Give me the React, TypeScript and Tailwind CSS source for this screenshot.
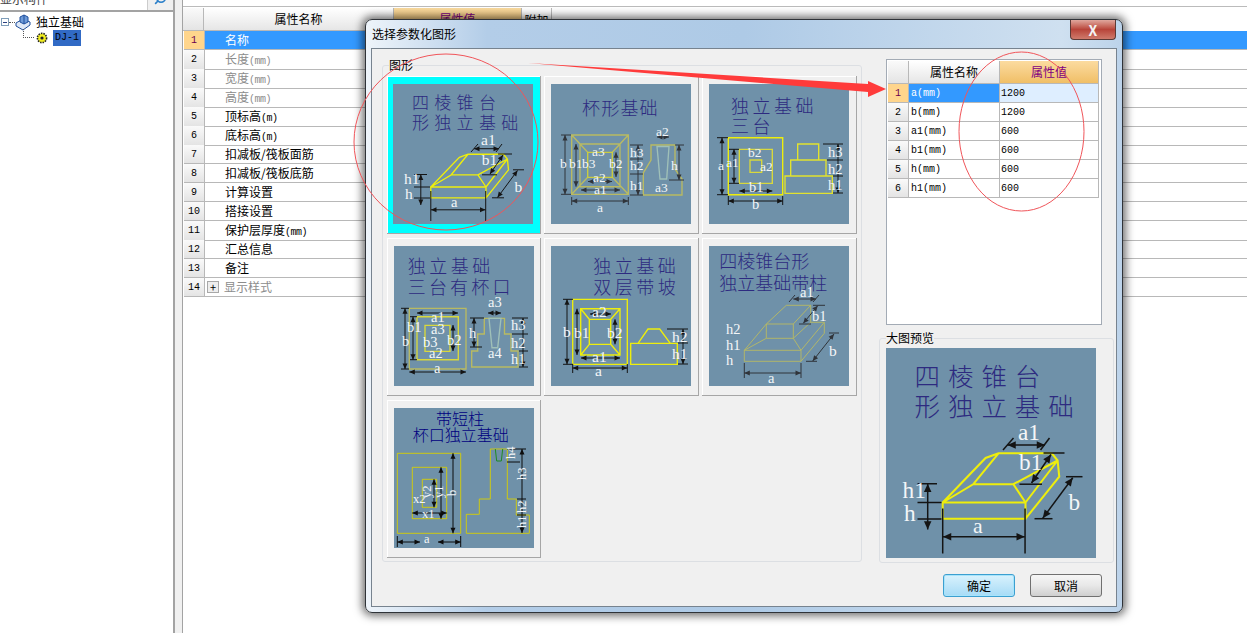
import type { ReactNode } from "react";
import { Search } from "lucide-react";

const cjk = "font-['Noto_Sans_CJK_SC','Liberation_Sans',sans-serif]";
const mono = "font-['Liberation_Mono','Noto_Sans_CJK_SC',monospace]";

const INK = "#141414";
const BRIGHT = "#eeee0c";
const DULL = "#b9ba62";

/* small svg helpers, all coordinates in the 140x140 picture */
function Dim({ x1, y1, x2, y2, c = INK }: { x1: number; y1: number; x2: number; y2: number; c?: string }) {
	const len = Math.hypot(x2 - x1, y2 - y1) || 1;
	const ux = (x2 - x1) / len;
	const uy = (y2 - y1) / len;
	const head = (x: number, y: number, d: number) =>
		`${x},${y} ${x + d * ux * 5.5 - uy * 2.5},${y + d * uy * 5.5 + ux * 2.5} ${x + d * ux * 5.5 + uy * 2.5},${y + d * uy * 5.5 - ux * 2.5}`;
	return (
		<g>
			<line x1={x1} y1={y1} x2={x2} y2={y2} stroke={c} strokeWidth="1" />
			<polygon points={head(x1, y1, 1)} fill={c} />
			<polygon points={head(x2, y2, -1)} fill={c} />
		</g>
	);
}

function Ticks({ lines, c = INK, w = 1 }: { lines: number[][]; c?: string; w?: number }) {
	return (
		<g stroke={c} strokeWidth={w}>
			{lines.map((l, i) => (
				<line key={i} x1={l[0]} y1={l[1]} x2={l[2]} y2={l[3]} />
			))}
		</g>
	);
}

function L({ x, y, t, s = 13, r }: { x: number; y: number; t: string; s?: number; r?: boolean }) {
	return (
		<text
			x={x}
			y={y}
			fontSize={s + 1.5}
			fill="#f4f6f8"
			fontFamily="'Liberation Serif', serif"
			transform={r ? `rotate(-90 ${x} ${y})` : undefined}
		>
			{t}
		</text>
	);
}

function Title({ x, y, t, s = 18, gap = 3, c = "#2d2a80" }: { x: number; y: number; t: string; s?: number; gap?: number; c?: string }) {
	return (
		<text x={x} y={y} fontSize={s} letterSpacing={gap} fill={c} fontFamily="'Noto Sans CJK SC', sans-serif" fontWeight="300">
			{t}
		</text>
	);
}

function Shape({ d, c = BRIGHT, w = 1.35 }: { d: string; c?: string; w?: number }) {
	return <path d={d} fill="none" stroke={c} strokeWidth={w} />;
}

function Picture({ children, big }: { children: ReactNode; big?: boolean }) {
	return (
		<svg viewBox="0 0 140 140" className={big ? "block w-[210px] h-[210px] bg-[#6f91a9]" : "block w-[140px] h-[140px] bg-[#6f91a9]"}>
			{children}
		</svg>
	);
}

function Pic1() {
	return (
		<>
			<Title x={19} y={25} t="四棱锥台" s={17} gap={5.3} />
			<Title x={19} y={45} t="形独立基础" s={17} gap={5.3} />
			<Shape d="M37.8 103 H93 V113.8 H37.8 Z M37.8 103 L66.4 73.3 L75 70.2 H110.5 L114.4 75 L115.5 85.8 L93 113.8 M93 103 L84.9 90.8 H58.2 L37.8 103 M58.2 90.8 L75 70.2 M84.9 90.8 L114.4 75 M114.4 75 L93 103" />
			<Ticks lines={[[37.8, 107, 37.8, 137], [92.7, 107, 92.7, 137], [21, 90.5, 34, 90.5], [21, 103, 37, 103], [21, 114, 37, 114], [78, 68, 85, 60], [103, 68, 109, 60], [105, 70, 119, 70], [89, 90.8, 104, 90.8], [120, 85.8, 131, 85.8], [99, 113.8, 111, 113.8]]} />
			<Dim x1={38} y1={125.8} x2={92.5} y2={125.8} />
			<Dim x1={27.8} y1={90.5} x2={27.8} y2={121} />
			<Dim x1={81} y1={64.7} x2={106} y2={64.7} />
			<Dim x1={110} y1={71} x2={97} y2={90} />
			<Dim x1={124.5} y1={86.5} x2={104.5} y2={113.5} />
			<L x={11} y={100} t="h1" s={14} />
			<L x={12} y={115} t="h" s={14} />
			<L x={58} y={123} t="a" s={13} />
			<L x={88} y={61} t="a1" s={14} />
			<L x={88.7} y={81} t="b1" s={14} />
			<L x={121.6} y={108} t="b" s={14} />
		</>
	);
}

function Pic2() {
	return (
		<>
			<Title x={31} y={31} t="杯形基础" s={18} gap={1.2} />
			<Shape c={DULL} d="M20.7 51 H77.3 V110.3 H20.7 Z M29 60 H69 V102.7 H29 Z M20.7 51 L36.7 68.3 M77.3 51 L61.3 68.3 M20.7 110.3 L36.7 93.3 M77.3 110.3 L61.3 93.3" />
			<Shape c="#c9cc40" d="M36.7 68.3 H61.3 V93.3 H36.7 Z" />
			<Shape c={DULL} d="M100 61 H124 V85 L131 95 V111 H92.3 V89 L100 76 Z" />
			<Shape c="#9fc0b8" d="M106 62.5 H118 L115.7 95 H109 Z" />
			<Ticks c="#30343a" lines={[[10, 51, 20, 51], [10, 110.3, 20, 110.3], [20.7, 113, 20.7, 121], [77.3, 113, 77.3, 121], [79, 61, 92, 61], [79, 75, 92, 75], [79, 90, 92, 90], [79, 111, 92, 111], [124, 61, 133, 61], [118, 96, 133, 96]]} />
			<Dim c="#30343a" x1={14} y1={51} x2={14} y2={110.3} />
			<Dim c="#30343a" x1={25} y1={60} x2={25} y2={102.7} />
			<Dim c="#30343a" x1={20.7} y1={117} x2={77.3} y2={117} />
			<Dim c="#30343a" x1={30} y1={106} x2={69} y2={106} />
			<Dim c="#30343a" x1={37} y1={97.5} x2={61} y2={97.5} />
			<Dim c="#30343a" x1={65} y1={68.3} x2={65} y2={93} />
			<Dim c="#30343a" x1={87} y1={61} x2={87} y2={111} />
			<Dim c="#30343a" x1={128} y1={61} x2={128} y2={96} />
			<Dim c="#30343a" x1={106} y1={53} x2={118} y2={53} />
			<L x={9} y={84} t="b" s={12} />
			<L x={18} y={84} t="b1" s={12} />
			<L x={31} y={84} t="b3" s={12} />
			<L x={58} y={84} t="b2" s={12} />
			<L x={41} y={72} t="a3" s={12} />
			<L x={42} y={98} t="a2" s={12} />
			<L x={43} y={110} t="a1" s={12} />
			<L x={46} y={128} t="a" s={12} />
			<L x={79} y={73} t="h3" s={12} />
			<L x={79} y={86} t="h2" s={12} />
			<L x={79} y={106} t="h1" s={12} />
			<L x={105} y={52} t="a2" s={12} />
			<L x={120} y={86} t="h" s={12} />
			<L x={104} y={108} t="a3" s={12} />
		</>
	);
}

function Pic3() {
	return (
		<>
			<Title x={22} y={29} t="独立基础" s={18} gap={3.5} />
			<Title x={22} y={49} t="三台" s={18} gap={3.5} />
			<Shape d="M19.3 53.7 H73.7 V110.7 H19.3 Z" />
			<Shape c="#d8d83c" d="M30.3 65.3 H63.3 V99.3 H30.3 Z M41 76 H52.7 V88.3 H41 Z" />
			<Shape c="#e2e22e" d="M88.7 60 H109.7 V76 H88.7 Z M81.7 76 H117 V92 H81.7 Z M76 92 H123.3 V109.3 H76 Z" />
			<Ticks lines={[[8, 53.7, 19, 53.7], [8, 110.7, 19, 110.7], [20, 65.3, 30, 65.3], [20, 99.3, 30, 99.3], [19.3, 112, 19.3, 121], [73.7, 112, 73.7, 121], [114, 60, 134, 60], [118, 76, 134, 76], [124, 92, 134, 92], [124, 109, 134, 109]]} />
			<Dim x1={13} y1={53.7} x2={13} y2={110.7} />
			<Dim x1={25} y1={65.3} x2={25} y2={99.3} />
			<Dim x1={19.3} y1={117} x2={73.7} y2={117} />
			<Dim x1={30.3} y1={107} x2={63.3} y2={107} />
			<Dim x1={129} y1={60} x2={129} y2={109} />
			<L x={9} y={86} t="a" s={12} />
			<L x={17} y={83} t="a1" s={12} />
			<L x={39} y={73} t="b2" s={12} />
			<L x={51} y={87} t="a2" s={12} />
			<L x={40} y={108} t="b1" s={13} />
			<L x={43} y={125} t="b" s={13} />
			<L x={119} y={73} t="h3" s={13} />
			<L x={119} y={90} t="h2" s={13} />
			<L x={119} y={106} t="h1" s={13} />
		</>
	);
}

function Pic4() {
	return (
		<>
			<Title x={13.7} y={27} t="独立基础" s={18} gap={3.5} />
			<Title x={13.7} y={48} t="三台有杯口" s={18} gap={3.2} />
			<Shape c={DULL} d="M15.3 62.3 H72 V123 H15.3 Z M95 72.3 H110.5 V88 H117 V105 H124 V121 H77.7 V105 H83.7 V88 H90.3 V72.3 Z" />
			<Shape c="#d8d83c" d="M23 70.7 H64.3 V113.7 H23 Z M31 79.3 H56 V105.3 H31 Z" />
			<Shape c="#9fc0b8" d="M95 72.3 H107 L103.7 101.7 H98 Z" />
			<Ticks lines={[[7, 62.3, 15, 62.3], [7, 123, 15, 123], [16, 70.7, 23, 70.7], [16, 113.7, 23, 113.7], [76, 72, 90, 72], [76, 101, 88, 101], [118, 72, 134, 72], [118, 88, 134, 88], [125, 105, 134, 105], [125, 121, 134, 121]]} />
			<Dim x1={11} y1={62.3} x2={11} y2={123} />
			<Dim x1={19} y1={70.7} x2={19} y2={113.7} />
			<Dim x1={23} y1={67} x2={64} y2={67} />
			<Dim x1={15.3} y1={126} x2={72} y2={126} />
			<Dim x1={59} y1={79} x2={59} y2={105} />
			<Dim x1={80} y1={72} x2={80} y2={101} />
			<Dim x1={129} y1={72} x2={129} y2={121} />
			<Dim x1={94} y1={67} x2={107} y2={67} />
			<L x={37} y={76} t="a1" s={13} />
			<L x={13} y={86} t="b1" s={13} />
			<L x={8} y={100} t="b" s={13} />
			<L x={37} y={88} t="a3" s={13} />
			<L x={29} y={101} t="b3" s={13} />
			<L x={53} y={99} t="b2" s={13} />
			<L x={35} y={112} t="a2" s={13} />
			<L x={40} y={127} t="a" s={13} />
			<L x={94} y={61} t="a3" s={13} />
			<L x={75} y={92} t="h" s={13} />
			<L x={94} y={112} t="a4" s={13} />
			<L x={117} y={84} t="h3" s={13} />
			<L x={117} y={102} t="h2" s={13} />
			<L x={117} y={118} t="h1" s={13} />
		</>
	);
}

function Pic5() {
	return (
		<>
			<Title x={42.3} y={27} t="独立基础" s={18} gap={3.5} />
			<Title x={42.3} y={48} t="双层带坡" s={18} gap={3.5} />
			<Shape d="M21.7 53.3 H76.3 V118.3 H21.7 Z M29.7 62.7 H69 V109 H29.7 Z M38.3 73.3 H59.7 V98.3 H38.3 Z M29.7 62.7 L38.3 73.3 M69 62.7 L59.7 73.3 M29.7 109 L38.3 98.3 M69 109 L59.7 98.3 M79.7 97.3 H126.3 V118.3 H79.7 Z M87 97.3 L97 83 H108.7 L119.3 97.3" />
			<Ticks lines={[[12, 53.3, 22, 53.3], [12, 118.3, 22, 118.3], [21.7, 118, 21.7, 127], [76.3, 118, 76.3, 127], [116, 83, 137, 83], [127, 97, 137, 97], [127, 118, 137, 118]]} />
			<Dim x1={16} y1={53.3} x2={16} y2={118.3} />
			<Dim x1={26} y1={62.7} x2={26} y2={109} />
			<Dim x1={39} y1={68} x2={60} y2={68} />
			<Dim x1={64} y1={73.3} x2={64} y2={98.3} />
			<Dim x1={30} y1={112} x2={69} y2={112} />
			<Dim x1={21.7} y1={122} x2={76.3} y2={122} />
			<Dim x1={132} y1={83} x2={132} y2={118} />
			<L x={12} y={91} t="b" s={14} />
			<L x={23} y={92} t="b1" s={14} />
			<L x={41} y={71} t="a2" s={14} />
			<L x={56} y={92} t="b2" s={14} />
			<L x={41} y={116} t="a1" s={14} />
			<L x={44} y={130} t="a" s={14} />
			<L x={121} y={96} t="h2" s={14} />
			<L x={121} y={113} t="h1" s={14} />
		</>
	);
}

function Pic6() {
	return (
		<>
			<Title x={10.3} y={22} t="四棱锥台形" s={18} gap={0} />
			<Title x={10.3} y={44} t="独立基础带柱" s={18} gap={0} />
			<Shape c={DULL} w={0.9} d="M35.3 104.3 H92 V115.3 H35.3 Z M57.3 78 H84.3 V92.3 H57.3 Z M35.3 104.3 L57.3 78 L77.3 59.3 H101.7 L84.3 78 M35.3 104.3 L57.3 92.3 M84.3 92.3 L92 104.3 L115.3 76.3 V87.3 L92 115.3 M101.7 59.3 V76.3 H115.3 M84.3 92.3 L101.7 76.3" />
			<Ticks c="#30343a" lines={[[35.3, 117, 35.3, 132], [92, 117, 92, 132], [80, 56, 86, 49], [104, 56, 110, 49], [104, 59.3, 116, 59.3], [90, 78, 102, 78], [120, 87, 130, 87], [97, 115.3, 108, 115.3]]} />
			<Dim c="#30343a" x1={35.3} y1={127} x2={92} y2={127} />
			<Dim c="#30343a" x1={84.3} y1={53} x2={107} y2={53} />
			<Dim c="#30343a" x1={108.7} y1={59.7} x2={94.3} y2={77.3} />
			<Dim c="#30343a" x1={125} y1={88} x2={103.7} y2={115} />
			<L x={91} y={51} t="a1" s={13} />
			<L x={103} y={75} t="b1" s={13} />
			<L x={17} y={88} t="h2" s={13} />
			<L x={17} y={104} t="h1" s={13} />
			<L x={17} y={119} t="h" s={13} />
			<L x={59} y={137} t="a" s={13} />
			<L x={120} y={110} t="b" s={14} />
		</>
	);
}

function Pic7() {
	const c = "#d8d000";
	const k = "#0d0d0d";
	return (
		<>
			<Title x={42} y={17} t="带短柱" s={16} gap={0} c="#00007f" />
			<Title x={18.7} y={33} t="杯口独立基础" s={16} gap={0} c="#00007f" />
			<Shape c={c} w={0.9} d="M3.3 45.3 H66.7 V125.3 H3.3 Z M18.3 59.3 H52.7 V110.7 H18.3 Z M28.3 71.3 H42.7 V99.3 H28.3 Z M96.3 41 H113.3 V91 H122.3 V107 H135.3 V125.3 H72.3 V106.3 H85.3 V91 H96.3 Z" />
			<Shape c="#168a16" w={0.9} d="M101.3 41 L102.7 53 H107.3 L108.7 41" />
			<Ticks c={k} lines={[[3.3, 128, 3.3, 139], [66.7, 128, 66.7, 139], [113, 54, 126, 54], [123, 91, 132, 91], [123, 107, 132, 107], [113, 41, 132, 41]]} />
			<Dim c={k} x1={3.3} y1={134} x2={26} y2={134} />
			<Dim c={k} x1={66.7} y1={134} x2={44} y2={134} />
			<Dim c={k} x1={59} y1={45.3} x2={59} y2={125.3} />
			<Dim c={k} x1={47} y1={59.3} x2={47} y2={110.7} />
			<Dim c={k} x1={40} y1={71.3} x2={40} y2={99.3} />
			<Dim c={k} x1={18.3} y1={105} x2={52.7} y2={105} />
			<Dim c={k} x1={128} y1={41} x2={128} y2={125} />
			<L x={30} y={135} t="a" s={11} />
			<L x={19} y={95} t="x2" s={11} />
			<L x={28} y={110} t="x1" s={11} />
			<L x={37} y={90} t="y2" s={11} r />
			<L x={49} y={90} t="y1" s={11} r />
			<L x={62} y={88} t="b" s={11} r />
			<L x={121} y={51} t="h4" s={11} r />
			<L x={132} y={72} t="h3" s={11} r />
			<L x={132} y={105} t="h2" s={11} r />
			<L x={132} y={120} t="h1" s={11} r />
		</>
	);
}

const tiles = [Pic1, Pic2, Pic3, Pic4, Pic5, Pic6, Pic7];

const mainRows: { name: string; unit?: string; dim?: boolean; plus?: boolean }[] = [
	{ name: "名称" },
	{ name: "长度", unit: "(mm)", dim: true },
	{ name: "宽度", unit: "(mm)", dim: true },
	{ name: "高度", unit: "(mm)", dim: true },
	{ name: "顶标高", unit: "(m)" },
	{ name: "底标高", unit: "(m)" },
	{ name: "扣减板/筏板面筋" },
	{ name: "扣减板/筏板底筋" },
	{ name: "计算设置" },
	{ name: "搭接设置" },
	{ name: "保护层厚度", unit: "(mm)" },
	{ name: "汇总信息" },
	{ name: "备注" },
	{ name: "显示样式", dim: true, plus: true }
];

const paramRows = [
	["a", "1200"],
	["b", "1200"],
	["a1", "600"],
	["b1", "600"],
	["h", "600"],
	["h1", "600"]
];

const indexCell = "flex items-center justify-center bg-gradient-to-b from-[#fafafa] to-[#e4e4e4] border-r border-b border-[#b8b8b8]";
const headCell = "flex items-center justify-center bg-gradient-to-b from-[#ffffff] to-[#e6e6e6] border-r border-b border-[#b8b8b8]";
const valueHead = "flex items-center justify-center bg-gradient-to-b from-[#fbdb9f] to-[#f0bf66] border-r border-b border-[#b8b8b8] text-[#800080]";

function Tree() {
	return (
		<div className={`${cjk} text-[12px] text-black pt-[2px] h-[48px]`}>
			<div className="flex items-center h-[16px]">
				<div className="ml-[1px] w-[8px] h-[8px] border border-[#7f9db9] flex items-center justify-center bg-white">
					<div className="w-[4px] h-px bg-[#2b3f80]" />
				</div>
				<div className="w-[6px] border-t border-dotted border-[#555]" />
				<svg width="17" height="17" viewBox="0 0 17 17">
					<path d="M1 9 L8 5 L15 8 V11 L8 16 L1 12 Z" fill="#dfe9f7" stroke="#1f4f9c" strokeWidth="1" />
					<path d="M5 3 L9 1 L13 3 V8 L9 10 L5 8 Z" fill="#6f9bd8" stroke="#1f4f9c" strokeWidth="1" />
					<path d="M9 1 V10" stroke="#1f4f9c" />
				</svg>
				<span className="ml-[4px]">独立基础</span>
			</div>
			<div className="flex items-center h-[16px] pl-[23px]">
				<div className="w-[11px] h-[9px] -mt-[9px] border-l border-b border-dotted border-[#555]" />
				<svg width="12" height="12" viewBox="0 0 12 12" className="ml-[2px]">
					<circle cx="6" cy="6" r="4.6" fill="#f2ee20" stroke="#222" strokeDasharray="1.5 1" strokeWidth="1.6" />
					<circle cx="6" cy="6" r="1.6" fill="#222" />
				</svg>
				<span className={`${mono} ml-[5px] bg-[#316ac5] text-[10px] leading-[16px] px-[2px] w-[28px] text-black`}>DJ-1</span>
			</div>
		</div>
	);
}

function MainGrid() {
	return (
		<div className={`${cjk} flex-1 pt-[6px] text-[12px] text-black`}>
			<div className="border-t border-[#bbb] pt-px">
				<div className="grid grid-cols-[21px_190px_128px_30px_1fr] h-[23px]">
					<div className={indexCell} />
					<div className={headCell}>属性名称</div>
					<div className={valueHead}>属性值</div>
					<div className="flex items-center justify-center border-r border-[#bbb]">附加</div>
					<div />
				</div>
				{mainRows.map((r, i) => (
					<div key={r.name} className="grid grid-cols-[21px_1fr] h-[19px] ml-px">
						<div className={`${mono} text-[10px] ${i === 0 ? "flex items-center justify-center bg-[#ffd58c] text-[#6a0050] border-r border-b border-[#b8b8b8]" : indexCell}`}>{i + 1}</div>
						<div className={`flex items-center border-b border-[#b8b8b8] pl-[20px] ${i === 0 ? "bg-[#3399ff] text-white" : r.dim ? "text-[#8c8c8c]" : ""}`}>
							{r.plus && (
								<div className="-ml-[18px] mr-[5px] w-[12px] h-[12px] border border-[#a8a8a8] bg-[#eee] flex items-center justify-center text-[11px] leading-none text-black">+</div>
							)}
							<span>
								{r.name}
								{r.unit && <span className="text-[10px] font-['Liberation_Mono',monospace] tracking-[-0.5px]">{r.unit}</span>}
							</span>
						</div>
					</div>
				))}
			</div>
		</div>
	);
}

function ParamGrid() {
	return (
		<div className="ml-[7px] w-[216px] h-[266px] border border-[#a3abb5] bg-white p-px pr-[3px]">
			<div className={`${cjk} text-[12px] text-black`}>
				<div className="grid grid-cols-[21px_91px_99px] h-[23px]">
					<div className={indexCell} />
					<div className={headCell}>属性名称</div>
					<div className={valueHead}>属性值</div>
				</div>
				{paramRows.map((r, i) => (
					<div key={r[0]} className={`${mono} grid grid-cols-[21px_91px_99px] h-[19px] text-[10px]`}>
						<div className={i === 0 ? "flex items-center justify-center bg-[#ffd58c] text-[#6a0050] border-r border-b border-[#b8b8b8]" : indexCell}>{i + 1}</div>
						<div className={`flex items-center pl-[2px] border-r border-b border-[#b8b8b8] ${i === 0 ? "bg-[#3399ff] text-white" : ""}`}>{r[0]}(mm)</div>
						<div className={`flex items-center pl-px border-r border-b border-[#b8b8b8] ${i === 0 ? "bg-[#deeeff]" : ""}`}>{r[1]}</div>
					</div>
				))}
			</div>
		</div>
	);
}

function Dialog() {
	return (
		<div className={`${cjk} absolute left-[365px] top-[19px] w-[758px] h-[594px] rounded-[7px] border border-[#2f3338] shadow-[0_0_9px_3px_rgba(0,0,0,0.55)] flex flex-col bg-[linear-gradient(90deg,#eef4fa_0%,#b3cde8_16%,#aecae6_50%,#cfe0f0_92%,#bcd3ea_100%)] overflow-hidden text-[12px] text-black`}>
			<div className="flex justify-between h-[28px] pl-[6px] pr-[6px] shrink-0">
				<span className="pt-[5px]">选择参数化图形</span>
				<div className="w-[46px] h-[20px] rounded-b-[4px] border border-t-0 border-[#5c3a36] bg-gradient-to-b from-[#dfa79e] via-[#b8443a] to-[#cf7a6c] flex items-center justify-center text-[#f4f4f4] font-bold text-[14px] leading-none">
					X
				</div>
			</div>
			<div className="flex-1 mx-[5px] mb-[5px] bg-[#f0f0f0] border border-[#77838f] flex flex-col">
				<div className="flex pl-[10px] pt-[8px]">
					<fieldset className="w-[480px] h-[505px] border border-[#dcdfe3] rounded-[3px] pl-[4px] pt-[3px]">
						<legend className="ml-[2px] h-[16px] leading-[16px]">图形</legend>
						<div className="grid grid-cols-[154px_155px_155px] grid-rows-[158px_158px_158px] gap-x-[3px] gap-y-[4px]">
							{tiles.map((Pic, i) => (
								<div
									key={i}
									className={`pt-[8px] border-r border-b border-[#a6a6a6] shadow-[inset_1px_1px_0_#fff] ${i === 0 ? "pl-[6px] bg-[#00ffff]" : "pl-[7px] bg-[#f0f0f0]"}`}
								>
									<Picture>
										<Pic />
									</Picture>
								</div>
							))}
						</div>
					</fieldset>
					<div className="ml-[17px] w-[235px] pt-[2px]">
						<ParamGrid />
						<fieldset className="mt-[5px] h-[233px] border border-[#dcdfe3] rounded-[3px] pl-[6px] pt-[2px]">
							<legend className="h-[16px] leading-[16px]">大图预览</legend>
							<Picture big>
								<Pic1 />
							</Picture>
						</fieldset>
					</div>
				</div>
				<div className="flex justify-end gap-[15px] pr-[14px] mt-[11px]">
					<button className="w-[72px] h-[23px] rounded-[3px] border border-[#3c9fd0] shadow-[inset_0_0_0_1px_#a8e4fb] bg-gradient-to-b from-[#d9f2fd] to-[#a6dbf6]">确定</button>
					<button className="w-[72px] h-[23px] rounded-[3px] border border-[#707070] bg-gradient-to-b from-[#f6f6f6] via-[#e8e8e8] to-[#cfcfcf]">取消</button>
				</div>
			</div>
		</div>
	);
}

export default function App() {
	return (
		<div className="relative flex w-[1247px] h-[633px] overflow-hidden bg-white">
			{/* left tree panel */}
			<div className="w-[173px] shrink-0">
				<div className={`${cjk} flex h-[12px] border-b-2 border-[#a3a3a3] overflow-hidden bg-[#f0f0f0]`}>
					<div className="w-[148px] bg-white border-r border-[#ccc] text-[12px] leading-[12px] text-[#444] -mt-[8px] h-[20px] pt-px">显示构件…</div>
					<Search size={13} className="ml-[6px] -mt-[8px] -scale-x-100 text-[#2a7fc9]" strokeWidth={3} />
				</div>
				<Tree />
			</div>
			{/* splitter */}
			<div className="w-[10px] shrink-0 bg-[#f0f0f0] border-l-2 border-r border-l-[#a3a3a3] border-r-[#a3a3a3]" />
			<MainGrid />
			<Dialog />
			{/* hand drawn notes on top of the screenshot */}
			<svg className="absolute inset-0 pointer-events-none" width="1247" height="633" viewBox="0 0 1247 633">
				<ellipse cx="446" cy="142" rx="92" ry="88" fill="none" stroke="#f0555a" strokeWidth="1" />
				<ellipse cx="1021.5" cy="131.5" rx="62.5" ry="79.5" fill="none" stroke="#f0555a" strokeWidth="1" />
				<polygon points="528,63 868,84 868,81 886,89 868,97 868,92" fill="#ff3b3b" />
			</svg>
		</div>
	);
}
